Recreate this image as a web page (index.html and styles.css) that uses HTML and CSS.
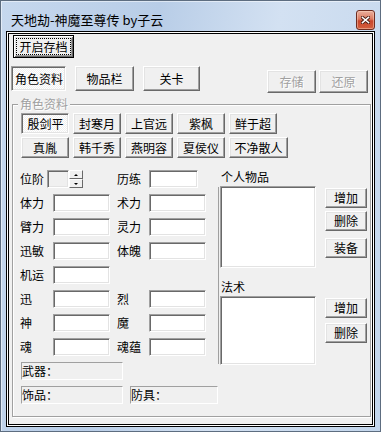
FILE: index.html
```html
<!DOCTYPE html>
<html lang="zh-CN">
  <head>
    <meta charset="UTF-8" />
    <title>天地劫-神魔至尊传 by子云</title>
    <link rel="stylesheet" href="styles.css">
  </head>
  <body>
    <div class="window">
      <div class="titlebar">
        <span class="title">天地劫-神魔至尊传 by子云</span>
        <button class="close-btn" title="关闭">
          <svg width="9" height="8" viewBox="0 0 9 8">
            <path d="M1.5 1.5 L7.5 6.5 M7.5 1.5 L1.5 6.5" stroke="#4a1d14" stroke-width="3.4" stroke-linecap="square" />
            <path d="M1.5 1.5 L7.5 6.5 M7.5 1.5 L1.5 6.5" stroke="#fff" stroke-width="1.6" stroke-linecap="square" />
          </svg>
        </button>
      </div>

      <div class="client">
        <div class="open-row">
          <button class="btn btn-default open-btn"><span class="focus">开启存档</span></button>
        </div>

        <div class="tab-row">
          <button class="btn btn-checked tab-role">角色资料</button>
          <button class="btn tab-items">物品栏</button>
          <button class="btn tab-stage">关卡</button>
          <button class="btn save-btn" disabled>存储</button>
          <button class="btn restore-btn" disabled>还原</button>
        </div>

        <div class="group">
          <span class="group-title">角色资料</span>

          <div class="hero-row">
            <button class="btn btn-checked hero">殷剑平</button>
            <button class="btn hero">封寒月</button>
            <button class="btn hero">上官远</button>
            <button class="btn hero">紫枫</button>
            <button class="btn hero">鲜于超</button>
          </div>
          <div class="hero-row second">
            <button class="btn hero">真胤</button>
            <button class="btn hero">韩千秀</button>
            <button class="btn hero">燕明容</button>
            <button class="btn hero">夏侯仪</button>
            <button class="btn hero hero-wide">不净散人</button>
          </div>

          <div class="panel">
            <div class="stats">
              <div class="row">
                <span class="lbl lbl-short">位阶</span>
                <input class="edit edit-rank" type="text" readonly />
                <div class="spin">
                  <span class="spin-btn"><i class="arrow-up"></i></span>
                  <span class="spin-btn"><i class="arrow-down"></i></span>
                </div>
                <span class="lbl lbl-right lbl-exp">历练</span>
                <input class="edit edit-exp" type="text" />
              </div>
              <div class="row">
                <span class="lbl">体力</span>
                <input class="edit" type="text" />
                <span class="lbl lbl-right">术力</span>
                <input class="edit" type="text" />
              </div>
              <div class="row">
                <span class="lbl">臂力</span>
                <input class="edit" type="text" />
                <span class="lbl lbl-right">灵力</span>
                <input class="edit" type="text" />
              </div>
              <div class="row">
                <span class="lbl">迅敏</span>
                <input class="edit" type="text" />
                <span class="lbl lbl-right">体魄</span>
                <input class="edit" type="text" />
              </div>
              <div class="row">
                <span class="lbl">机运</span>
                <input class="edit" type="text" />
              </div>
              <div class="row">
                <span class="lbl">迅</span>
                <input class="edit" type="text" />
                <span class="lbl lbl-right">烈</span>
                <input class="edit" type="text" />
              </div>
              <div class="row">
                <span class="lbl">神</span>
                <input class="edit" type="text" />
                <span class="lbl lbl-right">魔</span>
                <input class="edit" type="text" />
              </div>
              <div class="row">
                <span class="lbl">魂</span>
                <input class="edit" type="text" />
                <span class="lbl lbl-right">魂蕴</span>
                <input class="edit" type="text" />
              </div>
              <div class="row">
                <div class="static static-wide">武器：</div>
              </div>
              <div class="row">
                <div class="static static-wide">饰品：</div>
                <div class="static static-armor">防具：</div>
              </div>
            </div>

            <div class="vsep"></div>

            <div class="side">
              <div class="section">
                <div class="list-col">
                  <div class="side-label">个人物品</div>
                  <div class="listbox list-items"></div>
                </div>
                <div class="side-buttons">
                  <button class="btn side-btn">增加</button>
                  <button class="btn side-btn gap-small">删除</button>
                  <button class="btn side-btn gap-big">装备</button>
                </div>
              </div>
              <div class="section section-magic">
                <div class="list-col">
                  <div class="side-label">法术</div>
                  <div class="listbox list-magic"></div>
                </div>
                <div class="side-buttons">
                  <button class="btn side-btn">增加</button>
                  <button class="btn side-btn gap-mid">删除</button>
                </div>
              </div>
            </div>
          </div>
        </div>
      </div>
    </div>
  </body>
</html>
```

FILE: styles.css
```css
body {
  margin: 0;
  background-color: #fff;
  font-family: "Noto Sans CJK SC", sans-serif;
  font-size: 12px;
  color: #000;
}
.window {
  width: 381px;
  height: 432px;
  box-sizing: border-box;
  border: 1px solid #5d6d80;
  padding: 0 5px 4px;
  display: flex;
  flex-direction: column;
  background: linear-gradient(100deg, #c6d8ee 0%, #b8cde7 35%, #d3e1f2 62%, #c3d6ec 100%);
  box-shadow: inset 1px 1px 0 rgba(255, 255, 255, 0.5);
}
.titlebar {
  height: 30px;
  flex: none;
  display: flex;
  align-items: flex-start;
}
.title {
  margin: 11px 0 0 5px;
  font-size: 13px;
  line-height: 15px;
  white-space: nowrap;
}
.close-btn {
  margin: 9px 0 0 auto;
  width: 19px;
  height: 20px;
  box-sizing: border-box;
  padding: 0;
  border: 1px solid #6e2c20;
  border-radius: 3px;
  background: linear-gradient(#eab09e 0%, #dc7a60 45%, #c8452a 55%, #d4603f 100%);
  box-shadow: inset 0 0 0 1px rgba(255, 220, 200, 0.45);
  display: flex;
  align-items: center;
  justify-content: center;
}
.client {
  flex: 1;
  min-height: 0;
  box-sizing: border-box;
  background-color: #f0f0f0;
  border: 1px solid #000;
  box-shadow: inset 0 0 0 1px #fff, inset 0 0 0 2px #000;
  padding: 2px;
}

/* classic buttons */
.btn {
  box-sizing: border-box;
  font: inherit;
  line-height: 14px;
  color: #000;
  background-color: #f0f0f0;
  border: 1px solid;
  border-color: #fff #696969 #696969 #fff;
  box-shadow: inset -1px -1px 0 #a0a0a0, inset 1px 1px 0 #e3e3e3;
  padding: 0;
  display: flex;
  align-items: center;
  justify-content: center;
  white-space: nowrap;
}
.btn-checked {
  border-color: #a0a0a0 #fff #fff #a0a0a0;
  box-shadow: inset 1px 1px 0 #696969, inset -1px -1px 0 #e3e3e3;
  background: repeating-conic-gradient(#fff 0 25%, #f0f0f0 0 50%) 0 0 / 2px 2px;
  padding: 1px 0 0 1px;
}
.btn-default {
  border: 1px solid #000;
  box-shadow: inset 1px 1px 0 #fff, inset -1px -1px 0 #696969,
    inset 2px 2px 0 #e3e3e3, inset -2px -2px 0 #a0a0a0;
  padding: 2px;
}
.btn-default .focus {
  flex: 1;
  align-self: stretch;
  border: 1px dotted #000;
  display: flex;
  align-items: center;
  justify-content: center;
}
.btn:disabled {
  color: #a0a0a0;
  text-shadow: 1px 1px 0 #fff;
}

.open-row {
  display: flex;
  margin: 1px 0 0 4px;
}
.open-btn {
  width: 61px;
  height: 23px;
}
.tab-row {
  display: flex;
  align-items: flex-start;
  margin: 8px 0 0 2px;
}
.tab-role {
  width: 55px;
  height: 25px;
}
.tab-items {
  width: 59px;
  height: 25px;
  margin-left: 9px;
}
.tab-stage {
  width: 57px;
  height: 25px;
  margin-left: 9px;
}
.save-btn,
.restore-btn {
  width: 49px;
  height: 23px;
  margin-top: 4px;
}
.save-btn {
  margin-left: 67px;
}
.restore-btn {
  margin-left: 3px;
}

/* group box */
.group {
  box-sizing: border-box;
  width: 359px;
  height: 313px;
  margin: 11px 0 0 3px;
  border: 1px solid #a0a0a0;
  box-shadow: 1px 1px 0 #fff, inset 1px 1px 0 #fff;
}
.group-title {
  display: block;
  width: fit-content;
  margin: -8px 0 0 5px;
  padding: 0 2px;
  line-height: 14px;
  background-color: #f0f0f0;
  color: #a0a0a0;
  text-shadow: 1px 1px 0 #fff;
}
.hero-row {
  display: flex;
  gap: 4px;
  margin: 2px 0 0 8px;
}
.hero-row.second {
  margin-top: 3px;
}
.hero {
  width: 48px;
  height: 21px;
}
.hero-wide {
  width: 59px;
}

.panel {
  display: flex;
  margin-top: 12px;
}
.stats {
  width: 205px;
  box-sizing: border-box;
  padding-left: 7px;
}
.row {
  display: flex;
  align-items: center;
  height: 18px;
  margin-bottom: 6px;
}
.lbl {
  width: 33px;
  line-height: 18px;
  flex: none;
}
.lbl-short {
  width: 27px;
}
.lbl-right {
  width: 32px;
  margin-left: 7px;
}
.lbl-exp {
  margin-left: 34px;
}
.edit,
.listbox {
  box-sizing: border-box;
  background-color: #fff;
  border: 1px solid;
  border-color: #a0a0a0 #fff #fff #a0a0a0;
  box-shadow: inset 1px 1px 0 #696969, inset -1px -1px 0 #e3e3e3;
}
.edit {
  width: 57px;
  height: 18px;
  padding: 0;
  font: inherit;
  outline: none;
  flex: none;
}
.edit-rank {
  width: 22px;
  background-color: #f0f0f0;
}
.edit-exp {
  width: 49px;
}
.spin {
  width: 14px;
  height: 18px;
  display: flex;
  flex-direction: column;
  flex: none;
}
.spin-btn {
  flex: 1;
  box-sizing: border-box;
  background-color: #f0f0f0;
  border: 1px solid;
  border-color: #fff #696969 #696969 #fff;
  display: flex;
  align-items: center;
  justify-content: center;
}
.arrow-up,
.arrow-down {
  width: 0;
  height: 0;
  border-left: 2px solid transparent;
  border-right: 2px solid transparent;
}
.arrow-up {
  border-bottom: 2px solid #000;
}
.arrow-down {
  border-top: 2px solid #000;
}
.static {
  box-sizing: border-box;
  height: 18px;
  line-height: 16px;
  background-color: #f0f0f0;
  border: 1px solid;
  border-color: #a0a0a0 #fff #fff #a0a0a0;
  white-space: nowrap;
}
.static-wide {
  width: 102px;
  margin-left: 1px;
}
.static-armor {
  width: 88px;
  margin-left: 7px;
  flex: none;
}

.vsep {
  width: 1px;
  height: 177px;
  margin-top: 17px;
  background-color: #a0a0a0;
  flex: none;
}
.side {
  width: 151px;
  display: flex;
  flex-direction: column;
}
.section {
  display: flex;
  align-items: flex-start;
}
.section-magic {
  margin-top: 12px;
}
.list-col {
  width: 96px;
  margin-left: 1px;
}
.side-label {
  line-height: 14px;
  margin-left: 1px;
}
.listbox {
  margin-top: 2px;
}
.list-items {
  height: 82px;
}
.list-magic {
  height: 69px;
}
.side-buttons {
  display: flex;
  flex-direction: column;
  margin: 18px 0 0 9px;
}
.side-btn {
  width: 42px;
  height: 20px;
}
.gap-small {
  margin-top: 3px;
}
.gap-mid {
  margin-top: 5px;
}
.gap-big {
  margin-top: 7px;
}
```
